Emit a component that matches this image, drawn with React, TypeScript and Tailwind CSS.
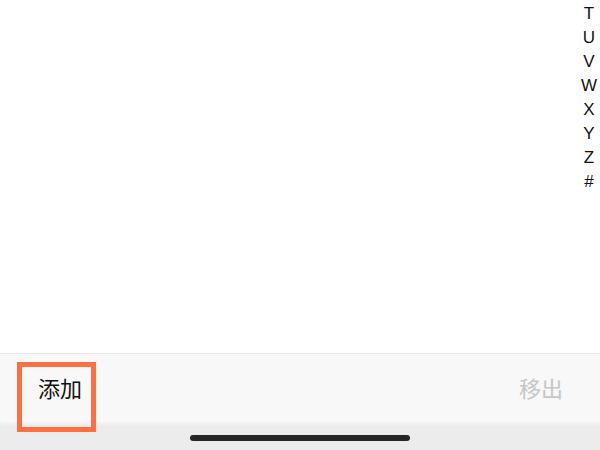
import React from 'react';

const letters = ['T', 'U', 'V', 'W', 'X', 'Y', 'Z', '#'];

const App = () => {
  return (
    <div className="w-[600px] h-[450px] flex flex-col bg-white overflow-hidden font-['Liberation_Sans','Noto_Sans_CJK_SC',sans-serif]">
      {/* list area with index bar */}
      <div className="flex-1 flex justify-end">
        <ul className="flex flex-col items-center w-6 mr-[-1px] pt-[2px] text-[17px] leading-6 text-[#111]">
          {letters.map((l) => (
            <li key={l}>{l}</li>
          ))}
        </ul>
      </div>

      {/* bottom toolbar */}
      <div className="relative h-[97px] border-t border-[#e6e6e6] bg-gradient-to-b from-[#f8f8f8] from-70% to-[#ececec] to-75%">
        <div className="h-[70px] flex items-center justify-between pl-[38px] pr-[37px] text-[22px]">
          <span className="text-[#111]">添加</span>
          <span className="text-[#c6c6c6]">移出</span>
        </div>
        <div className="flex justify-center pt-[11px]">
          <div className="w-[220px] h-[6px] rounded-full bg-[#262626]" />
        </div>
        <div className="absolute left-[17px] top-[8px] w-[79px] h-[70px] border-[5px] border-[#ff6f42]" />
      </div>
    </div>
  );
};

export default App;
